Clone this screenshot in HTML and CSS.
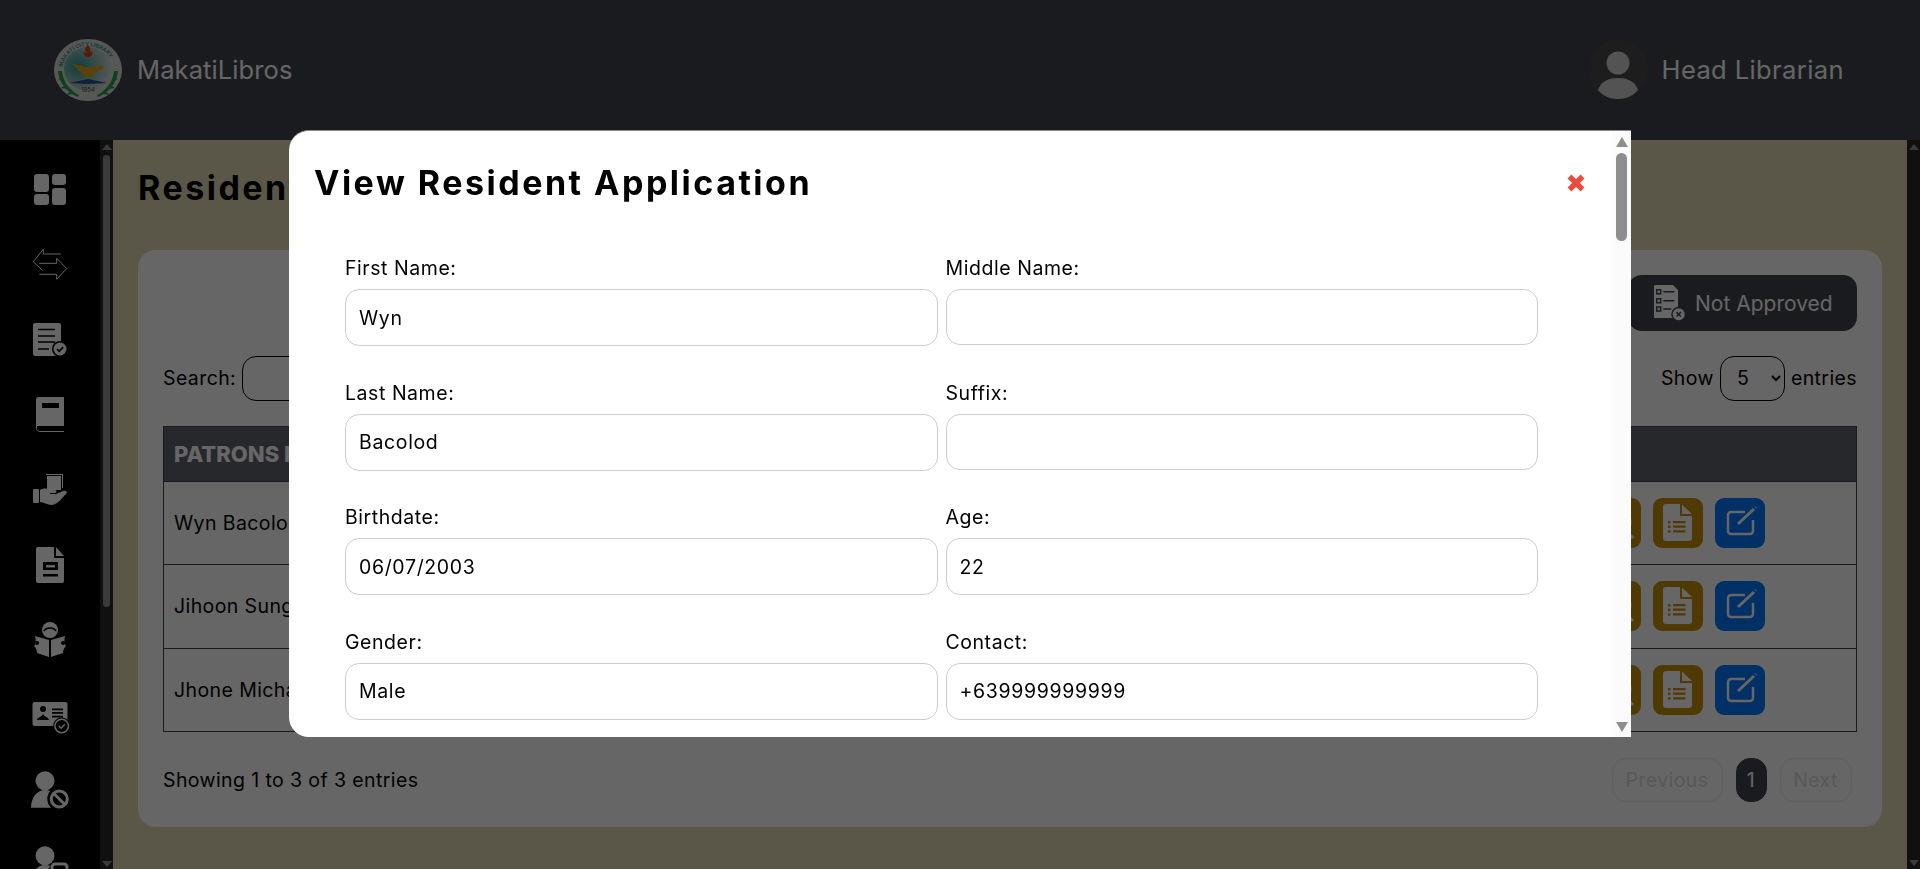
FILE: index.html
```html
<!DOCTYPE html>
<html lang="en">
<head>
  <meta charset="UTF-8">
  <meta name="viewport" content="width=device-width, initial-scale=1.0">
  <title>MakatiLibros</title>
  <link rel="stylesheet" href="styles.css">
</head>
<body>
  <!-- top bar -->
  <header class="topbar">
    <div class="brand">
      <svg class="logo" viewBox="0 0 68 62">
        <defs>
          <radialGradient id="seal" cx="0.3" cy="0.45" r="0.8">
            <stop offset="0" stop-color="#2f9c94"/>
            <stop offset="0.6" stop-color="#a9c9c2"/>
            <stop offset="1" stop-color="#e4e4e4"/>
          </radialGradient>
          <path id="ringText" d="M8 33 A26 26 0 0 1 60 33"/>
        </defs>
        <ellipse cx="34" cy="31" rx="34" ry="31" fill="#d8dcd8"/>
        <ellipse cx="34" cy="30" rx="24" ry="22" fill="url(#seal)"/>
        <text class="logo-ring"><textPath href="#ringText" startOffset="5">MAKATI CITY LIBRARY</textPath></text>
        <path d="M4 32c1 11 8 21 20 26l1-2C15 51 9 42 8 32z" fill="#2e9a4e"/>
        <path d="M64 32c-1 11-8 21-20 26l-1-2c10-5 16-14 17-24z" fill="#2e9a4e"/>
        <path d="M8 38l-4 2 5 2zM11 46l-4 3 6 1zM16 52l-3 4 6-1zM60 38l4 2-5 2zM57 46l4 3-6 1zM52 52l3 4-6-1z" fill="#2e9a4e"/>
        <path d="M34 6c-4 3-3 6-1 8-2 0-3-1-3-2-1 3 1 6 4 6 4 0 5-3 4-6-1 1-2 1-2 1 1-3 0-5-2-7z" fill="#d9431e"/>
        <path d="M19 25c4 1 8 1 11 3h13c2-2 5-3 6-1 1 3-2 5-5 4-1 3-3 4-6 5l2 2H29l2-2c-5-2-8-6-12-11z" fill="#e3a51d"/>
        <path d="M15 44l19-4 19 4-19 1z" fill="#27508f"/>
        <text class="logo-year" x="34" y="53" text-anchor="middle">1954</text>
      </svg>
      <span class="brand-name">MakatiLibros</span>
    </div>
    <div class="user">
      <svg class="avatar" viewBox="0 0 62 60">
        <defs><clipPath id="avatarClip"><circle cx="31" cy="30" r="30"/></clipPath></defs>
        <circle cx="31" cy="30" r="30" fill="#4a4a4a"/>
        <circle cx="31" cy="23" r="11.5" fill="#d0d0d0"/>
        <path clip-path="url(#avatarClip)" d="M11 50c3-9 11-12 20-12s17 3 20 12c-5 6-12 9-20 9s-15-3-20-9z" fill="#d0d0d0"/>
      </svg>
      <span class="user-name">Head Librarian</span>
    </div>
  </header>

  <div class="layout">
    <!-- side menu -->
    <nav class="sidebar">
      <div class="side-links">
        <a class="side-link" href="#">
          <svg viewBox="0 0 36 36"><rect x="2" y="2" width="15" height="18" rx="3"/><rect x="20" y="2" width="14" height="11" rx="3"/><rect x="2" y="22" width="15" height="11" rx="3"/><rect x="20" y="16" width="14" height="17" rx="3"/></svg>
        </a>
        <a class="side-link" href="#">
          <svg viewBox="0 0 36 36"><path class="line" d="M28.7 7H11.3V2.3L1.3 14.7l9 8.6M7.3 16.3H24.7V11.3L34.7 21.5 24.7 32.3V27.3H7.3"/></svg>
        </a>
        <a class="side-link" href="#">
          <svg viewBox="0 0 36 36"><rect x="1" y="1" width="28" height="33" rx="2"/><path class="cut" d="M6 7.5h17M6 14h17M6 20h17M6 27h11"/><circle class="hole" cx="28" cy="27" r="8"/><circle cx="28" cy="27" r="6.5"/><path class="cut" d="M25 27l2.200 2.200 4-4"/></svg>
        </a>
        <a class="side-link" href="#">
          <svg viewBox="0 0 36 36"><path d="M7 0h25v29H4V3a3 3 0 0 1 3-3z"/><path class="line" d="M4.500 29v2.500c0 1.700 1.500 3 3 3H32"/><rect class="hole" x="10" y="6" width="17" height="5"/></svg>
        </a>
        <a class="side-link" href="#">
          <svg viewBox="0 0 36 36"><rect x="15" y="4" width="14" height="14"/><path class="line" d="M14 2.500h17M30.500 2.500V16"/><rect x="1" y="17" width="6" height="14" rx="1"/><path d="M8 18c3-2 7-2 10 0h5c2 0 2 3 0 3h-5v1h6l7-3c3-1 5 1 3 3-4 4-8 10-14 11-5 0-8-3-12-3z"/></svg>
        </a>
        <a class="side-link" href="#">
          <svg viewBox="0 0 36 36"><path d="M6 0h16v11h10v23a2 2 0 0 1-2 2H6a2 2 0 0 1-2-2V2a2 2 0 0 1 2-2z"/><path d="M24 0l8 9h-8z"/><rect class="hole" x="11" y="15" width="15" height="8"/><rect x="14" y="18" width="9" height="2.500"/><rect class="hole" x="11" y="27" width="15" height="2.500"/></svg>
        </a>
        <a class="side-link" href="#">
          <svg viewBox="0 0 36 36"><circle cx="18" cy="8" r="8"/><path class="cut" d="M12 9c2-4 10-4 12 0"/><path d="M3 14l14 4v17L5 31c0-3-1-5-3-7 2-2 2-6 1-10zM33 14l-14 4v17l12-4c0-3 1-5 3-7-2-2-2-6-1-10z"/><circle class="hole" cx="5" cy="21" r="2"/><circle class="hole" cx="31" cy="21" r="2"/></svg>
        </a>
        <a class="side-link" href="#">
          <svg viewBox="0 0 36 36"><rect x="0.500" y="5" width="35" height="24" rx="2"/><circle class="hole" cx="11" cy="12" r="3"/><path class="hole" d="M5 23c0-2 3-3 4.500-4l1.500-2 1.500 2c2 1 4.500 2 4.500 4z"/><path class="cut" d="M20 12.300h11M20 15.800h11M20 19.700h11"/><circle class="hole" cx="29.700" cy="29" r="8.500"/><circle class="ring" cx="29.700" cy="29" r="6.800"/><path class="tick" d="M26.800 29l2.200 2.200 3.800-4"/></svg>
        </a>
        <a class="side-link" href="#">
          <svg viewBox="0 0 36 36"><circle cx="13" cy="8.700" r="9.500"/><path d="M-1 35.700c0-10 6-17.700 14-17.700 5 0 9 2 11 6l-5 11.700z"/><circle class="hole" cx="27.300" cy="27" r="12"/><circle class="ring-thick" cx="27.300" cy="27" r="8"/><path class="slash" d="M22 21.700L32.600 32.300"/></svg>
        </a>
        <a class="side-link" href="#">
          <svg viewBox="0 0 36 36"><circle cx="13" cy="8.700" r="9.500"/><path d="M-1 35.700c0-10 6-17.700 14-17.700 5 0 9 2 11 6l-5 11.700z"/><circle class="hole" cx="27.300" cy="27" r="12"/><rect class="ring-thick" x="20" y="17" width="15" height="15" rx="3"/></svg>
        </a>
      </div>
      <div class="scrollbar side-scroll">
        <span class="arrow up"></span>
        <span class="thumb"></span>
        <span class="arrow down"></span>
      </div>
    </nav>

    <main class="content">
      <h1 class="page-title">Resident Applications</h1>
      <section class="card">
        <div class="filter-row">
          <button class="filter-btn" type="button">
            <svg viewBox="0 0 31 36">
              <path class="doc" d="M1.500 0H19l5 5v28H0V1.500A1.500 1.500 0 0 1 1.500 0z"/>
              <path class="cut" d="M2.700 4.800h4v4h-4zM2.700 13.800h4v4h-4zM2.700 22.100h4v4h-4zM9.300 6.700h11M9.300 15.700h11M9.300 24h8"/>
              <circle class="badge-gap" cx="24.700" cy="29.300" r="7.500"/>
              <circle class="doc" cx="24.700" cy="29.300" r="6"/>
              <path class="cut" d="M22.500 27.100l4.400 4.400M26.900 27.100l-4.400 4.400"/>
            </svg>
            Not Approved
          </button>
        </div>

        <div class="table-tools">
          <label class="tool">Search: <input class="search-box" type="text"></label>
          <label class="tool">Show
            <select class="entries-box"><option>5</option><option>10</option><option>25</option></select>
            entries
          </label>
        </div>

        <table class="patrons">
          <thead>
            <tr><th>PATRONS NAME</th><th class="action-col"></th></tr>
          </thead>
          <tbody>
            <tr>
              <td>Wyn Bacolod</td>
              <td class="action-col"><div class="actions">
                <a class="icon-btn gold" href="#"><svg viewBox="0 0 50 50"><circle class="stroke-w" cx="26" cy="24" r="13"/><path class="stroke-w" d="M36 34l6 6"/></svg></a>
                <a class="icon-btn gold" href="#"><svg viewBox="0 0 50 50"><path class="sheet" d="M13 6h14v12h12v22a3 3 0 0 1-3 3H13a3 3 0 0 1-3-3V9a3 3 0 0 1 3-3z"/><path class="sheet" d="M29 6.500l10 9.500H29z"/><path class="fold" d="M15 22.900h2.500v2.500H15zM15 27.500h2.500V30H15zM15 32.200h2.500v2.500H15zM20 22.900h12.500v2.300H20zM20 27.500h12.500v2.300H20zM20 32.200h12.500v2.300H20z"/></svg></a>
                <a class="icon-btn blue" href="#"><svg viewBox="0 0 50 50"><path class="stroke-w thin" d="M30 14H16a3 3 0 0 0-3 3v16a3 3 0 0 0 3 3h19a3 3 0 0 0 3-3V22"/><path class="stroke-w" d="M23 26L39 11"/><path class="stroke-w" d="M40.500 9.500l.5-.5"/></svg></a>
              </div></td>
            </tr>
            <tr>
              <td>Jihoon Sung</td>
              <td class="action-col"><div class="actions">
                <a class="icon-btn gold" href="#"><svg viewBox="0 0 50 50"><circle class="stroke-w" cx="26" cy="24" r="13"/><path class="stroke-w" d="M36 34l6 6"/></svg></a>
                <a class="icon-btn gold" href="#"><svg viewBox="0 0 50 50"><path class="sheet" d="M13 6h14v12h12v22a3 3 0 0 1-3 3H13a3 3 0 0 1-3-3V9a3 3 0 0 1 3-3z"/><path class="sheet" d="M29 6.500l10 9.500H29z"/><path class="fold" d="M15 22.900h2.500v2.500H15zM15 27.500h2.500V30H15zM15 32.200h2.500v2.500H15zM20 22.900h12.500v2.300H20zM20 27.500h12.500v2.300H20zM20 32.200h12.500v2.300H20z"/></svg></a>
                <a class="icon-btn blue" href="#"><svg viewBox="0 0 50 50"><path class="stroke-w thin" d="M30 14H16a3 3 0 0 0-3 3v16a3 3 0 0 0 3 3h19a3 3 0 0 0 3-3V22"/><path class="stroke-w" d="M23 26L39 11"/><path class="stroke-w" d="M40.500 9.500l.5-.5"/></svg></a>
              </div></td>
            </tr>
            <tr>
              <td>Jhone Michael</td>
              <td class="action-col"><div class="actions">
                <a class="icon-btn gold" href="#"><svg viewBox="0 0 50 50"><circle class="stroke-w" cx="26" cy="24" r="13"/><path class="stroke-w" d="M36 34l6 6"/></svg></a>
                <a class="icon-btn gold" href="#"><svg viewBox="0 0 50 50"><path class="sheet" d="M13 6h14v12h12v22a3 3 0 0 1-3 3H13a3 3 0 0 1-3-3V9a3 3 0 0 1 3-3z"/><path class="sheet" d="M29 6.500l10 9.500H29z"/><path class="fold" d="M15 22.900h2.500v2.500H15zM15 27.500h2.500V30H15zM15 32.200h2.500v2.500H15zM20 22.900h12.500v2.300H20zM20 27.500h12.500v2.300H20zM20 32.200h12.500v2.300H20z"/></svg></a>
                <a class="icon-btn blue" href="#"><svg viewBox="0 0 50 50"><path class="stroke-w thin" d="M30 14H16a3 3 0 0 0-3 3v16a3 3 0 0 0 3 3h19a3 3 0 0 0 3-3V22"/><path class="stroke-w" d="M23 26L39 11"/><path class="stroke-w" d="M40.500 9.500l.5-.5"/></svg></a>
              </div></td>
            </tr>
          </tbody>
        </table>

        <div class="table-foot">
          <span>Showing 1 to 3 of 3 entries</span>
          <div class="pager">
            <a class="page-btn prev" href="#">Previous</a>
            <a class="page-btn current" href="#">1</a>
            <a class="page-btn next" href="#">Next</a>
          </div>
        </div>
      </section>
    </main>

    <div class="scrollbar page-scroll">
      <span class="arrow up"></span>
      <span class="arrow down"></span>
    </div>
  </div>

  <!-- view application modal -->
  <div class="overlay">
    <div class="modal">
      <div class="modal-head">
        <h2 class="modal-title">View Resident Application</h2>
        <svg class="modal-close" viewBox="0 0 18 18"><path d="M2.500 2.500l13 13M15.500 2.500l-13 13"/></svg>
      </div>
      <form class="modal-form">
        <div class="field"><label>First Name:</label><input class="filled" type="text" value="Wyn"></div>
        <div class="field"><label>Middle Name:</label><input type="text"></div>
        <div class="field"><label>Last Name:</label><input class="filled" type="text" value="Bacolod"></div>
        <div class="field"><label>Suffix:</label><input type="text"></div>
        <div class="field"><label>Birthdate:</label><input class="filled" type="text" value="06/07/2003"></div>
        <div class="field"><label>Age:</label><input class="filled" type="text" value="22"></div>
        <div class="field"><label>Gender:</label><input class="filled" type="text" value="Male"></div>
        <div class="field"><label>Contact:</label><input class="filled" type="text" value="+639999999999"></div>
      </form>
      <div class="scrollbar modal-scroll">
        <span class="arrow up"></span>
        <span class="thumb"></span>
        <span class="arrow down"></span>
      </div>
    </div>
  </div>
</body>
</html>
```

FILE: styles.css
```css
* {
  box-sizing: border-box;
  margin: 0;
  padding: 0;
}
body {
  height: 869px;
  overflow: hidden;
  background: #e1dab7;
  color: #000;
  font-family: Inter, "Liberation Sans", sans-serif;
  font-size: 19.5px;
  letter-spacing: 0.4px;
}

/* top bar */
.topbar {
  display: flex;
  justify-content: space-between;
  align-items: center;
  height: 140px;
  padding: 0 76px 0 54px;
  background: #41444e;
  color: #fff;
}
.brand, .user {
  display: flex;
  align-items: center;
}
.logo {
  width: 68px;
  height: 62px;
  margin-right: 15px;
}
.logo-ring {
  font-size: 5.500px;
  font-weight: 700;
  letter-spacing: 0;
  fill: #3d8f87;
}
.logo-year {
  font-size: 6px;
  letter-spacing: 0;
  fill: #444;
}
.brand-name, .user-name {
  margin-bottom: 2px;
  font-size: 25.500px;
}
.brand-name { letter-spacing: 0.1px; }
.user-name { letter-spacing: 0.4px; }
.avatar {
  width: 62px;
  height: 60px;
  margin-right: 13px;
}

/* page body */
.layout {
  display: flex;
  height: 729px;
}
.sidebar {
  display: flex;
  flex: 0 0 113px;
  overflow: hidden;
  background: #000;
}
.side-links {
  flex: 0 0 100px;
  padding-top: 12.5px;
}
.side-link {
  display: flex;
  justify-content: center;
  align-items: center;
  height: 75px;
}
.side-link svg {
  width: 36px;
  height: 36px;
  overflow: visible;
  fill: #fff;
}
.side-link .line {
  fill: none;
  stroke: #fff;
  stroke-width: 1;
}
.side-link .cut {
  fill: none;
  stroke: #000;
  stroke-width: 1.7;
}
.side-link .hole { fill: #000; }
.side-link .ring {
  fill: #000;
  stroke: #fff;
  stroke-width: 1.500;
}
.side-link .tick {
  fill: none;
  stroke: #fff;
  stroke-width: 1.500;
}
.side-link .ring-thick {
  fill: none;
  stroke: #fff;
  stroke-width: 3;
}
.side-link .slash {
  fill: none;
  stroke: #fff;
  stroke-width: 3;
}

/* hand made scrollbars */
.scrollbar {
  display: flex;
  flex-direction: column;
  align-items: center;
}
.arrow {
  display: block;
  width: 0;
  height: 0;
  border-left: 5px solid transparent;
  border-right: 5px solid transparent;
}
.arrow.up { border-bottom: 6px solid #919191; }
.arrow.down {
  margin-top: auto;
  border-top: 6px solid #919191;
}
.side-scroll, .page-scroll {
  flex: 0 0 13px;
  padding: 4px 0 2px;
  background: #2a2a2a;
}
.side-scroll .thumb {
  width: 7px;
  height: 452px;
  margin-top: 5px;
  background: #919191;
  border-radius: 4px;
}
.page-scroll { padding-bottom: 3px; }

/* main */
.content {
  flex: 1;
  padding: 24px 25px 0;
}
.page-title {
  margin-bottom: 38px;
  font-size: 34px;
  line-height: 48px;
  font-weight: 700;
  letter-spacing: 2.500px;
}
.card {
  padding: 25px;
  height: 577px;
  background: #fff;
  border-radius: 18px;
}
.filter-row {
  display: flex;
  justify-content: flex-end;
}
.filter-btn {
  display: flex;
  align-items: center;
  gap: 10px;
  width: 229px;
  height: 56px;
  padding-left: 26px;
  border: none;
  border-radius: 14px;
  background: #41444e;
  color: #fff;
  font: inherit;
  font-size: 21px;
  letter-spacing: 0;
}
.filter-btn svg {
  width: 31px;
  height: 36px;
}
.filter-btn .doc { fill: #fff; }
.filter-btn .badge-gap { fill: #41444e; }
.filter-btn .cut {
  fill: none;
  stroke: #41444e;
  stroke-width: 1.500;
}
.table-tools {
  display: flex;
  justify-content: space-between;
  margin: 25px 0 25.500px;
}
.tool {
  display: flex;
  align-items: center;
  gap: 6px;
}
.search-box, .entries-box {
  height: 44.500px;
  border: 1px solid #000;
  border-radius: 14px;
  background: transparent;
  font: inherit;
}
.search-box { width: 260px; }
.entries-box {
  width: 65px;
  padding-left: 12px;
}

/* table */
.patrons {
  width: 100%;
  border-collapse: collapse;
}
.patrons th, .patrons td {
  padding: 0 10px;
  border: 1px solid #41444e;
  text-align: left;
}
.patrons th, .patrons td { border-left: none; border-right: none; }
.patrons tr > :first-child { border-left: 1px solid #41444e; }
.patrons tr > :last-child { border-right: 1px solid #41444e; }
.patrons th {
  height: 55px;
  background: #62646e;
  color: #fff;
  font-size: 22px;
  font-weight: 800;
  letter-spacing: 0;
}
.patrons td { height: 83.330px; }
.patrons .action-col {
  width: 279px;
  padding-left: 13px;
}
.actions {
  display: flex;
  gap: 12px;
}
.icon-btn {
  display: block;
  width: 50px;
  height: 50px;
  border-radius: 9px;
}
.icon-btn svg {
  display: block;
  width: 50px;
  height: 50px;
}
.gold { background: #c8920a; }
.blue { background: #0078ff; }
.sheet { fill: #fff; }
.fold { fill: #c8920a; }
.stroke-w {
  fill: none;
  stroke: #fff;
  stroke-width: 3;
}
.stroke-w.thin { stroke-width: 2.500; }
.table-foot {
  display: flex;
  justify-content: space-between;
  align-items: center;
  margin-top: 26px;
}
.pager {
  display: flex;
  gap: 13px;
  margin-right: 5.500px;
}
.page-btn {
  display: flex;
  justify-content: center;
  align-items: center;
  height: 44px;
  border: 1px solid #ededed;
  border-radius: 14px;
  color: #dcdcdc;
  text-decoration: none;
}
.prev { width: 111px; }
.next { width: 72px; }
.current {
  width: 31px;
  border-color: #41444e;
  background: #41444e;
  color: #fff;
}

/* modal */
.overlay {
  position: fixed;
  top: 0;
  left: 0;
  right: 0;
  bottom: 0;
  display: flex;
  justify-content: center;
  align-items: flex-start;
  padding-top: 130px;
  background: rgba(0, 0, 0, 0.6);
}
.modal {
  position: relative;
  width: 1342px;
  height: 607px;
  overflow: hidden;
  border-top: 1px solid #8a8a8a;
  border-radius: 20px 0 0 20px;
  background: #fff;
}
.modal-head {
  display: flex;
  justify-content: space-between;
  align-items: center;
  height: 103px;
  padding: 0 46px 0 25px;
}
.modal-title {
  font-size: 34px;
  font-weight: 700;
  letter-spacing: 2.500px;
}
.modal-close {
  width: 18px;
  height: 18px;
  overflow: visible;
  fill: none;
  stroke: #e74c3c;
  stroke-width: 5.500;
}
.modal-form {
  display: grid;
  grid-template-columns: 1fr 1fr;
  gap: 33.6px 8px;
  align-items: start;
  padding: 21px 93px 0 56px;
}
.field label {
  display: block;
  margin-bottom: 8px;
  line-height: 26px;
  letter-spacing: 0.55px;
}
.field input {
  display: block;
  width: 100%;
  height: 56px;
  padding: 0 13px;
  border: 1px solid #ccc;
  border-radius: 14px;
  font: inherit;
  letter-spacing: 0.65px;
}
.field input.filled { height: 57px; }
.modal-scroll {
  position: absolute;
  top: 0;
  right: 0;
  bottom: 0;
  width: 19px;
  padding: 6px 0 5px;
  background: #fbfbfb;
}
.modal-scroll .arrow {
  border-left-width: 6.500px;
  border-right-width: 6.500px;
}
.modal-scroll .arrow.up { border-bottom: 10px solid #8e8e8e; }
.modal-scroll .arrow.down { border-top: 10px solid #8e8e8e; }
.modal-scroll .thumb {
  width: 11px;
  height: 88px;
  margin-top: 6px;
  background: #8e8e8e;
  border-radius: 6px;
}
```
